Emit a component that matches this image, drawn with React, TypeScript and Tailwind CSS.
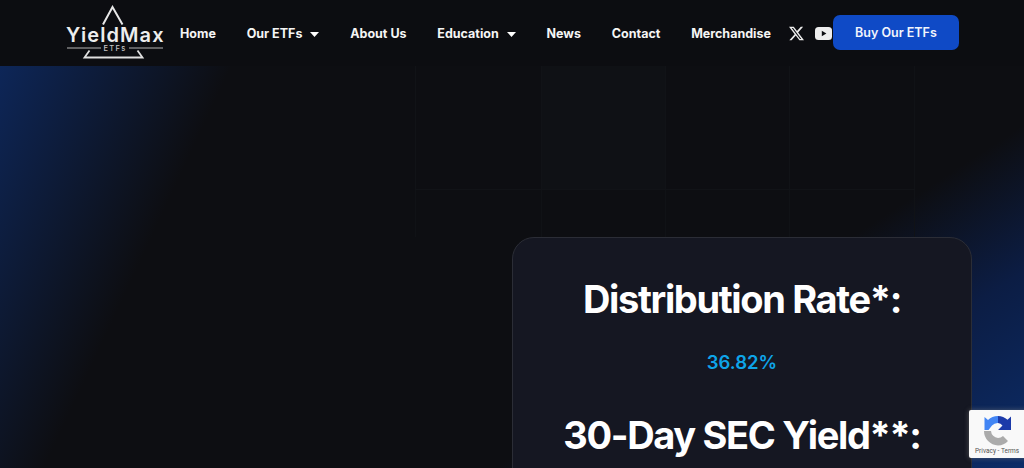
const navItems = [
  { label: "Home" },
  { label: "Our ETFs", caret: true },
  { label: "About Us" },
  { label: "Education", caret: true },
  { label: "News" },
  { label: "Contact" },
  { label: "Merchandise" },
];

const Caret = () => (
  <svg width="9" height="5" viewBox="0 0 9 5" className="ml-[8px] mt-[1px]">
    <path d="M0 0h9L4.5 5z" fill="#ffffff" />
  </svg>
);

const Logo = () => (
  <div className="relative h-[66px] w-[98px] shrink-0 text-[#eeeeee]">
    <svg width="98" height="66" viewBox="0 0 98 66" className="absolute left-0 top-0">
      <path d="M37 24.5 L46.5 7 L56.5 24.5" fill="none" stroke="#e8e8e8" strokeWidth="2" />
      <path d="M1 48h34M63 48h34" stroke="#b5b5b5" strokeWidth="1" />
      <path d="M23.5 50.5 L18.5 57.5 H76.5 L71.5 50.5" fill="none" stroke="#e0e0e0" strokeWidth="1.8" />
    </svg>
    <div className="absolute left-0 top-[26px] h-[18px] w-full text-center text-[20px] font-semibold leading-[18px] tracking-[1.1px]">
      YieldMax
    </div>
    <div className="absolute left-0 top-[44px] w-full text-center text-[7.5px] font-medium leading-[9px] tracking-[1.3px] text-[#c4c4c4]">
      ETFs
    </div>
  </div>
);

const Recaptcha = () => (
  <div className="absolute left-[969px] top-[410px] flex h-[48px] w-[70px] flex-col items-start rounded-l-[2px] bg-[#f9f9f9] pl-[6px] pt-[5px] shadow-[0_0_5px_rgba(128,128,128,0.6)]">
    <svg width="30" height="31" viewBox="0 0 30 31" className="ml-[8px]">
      <path d="M15 1a14 14 0 0 1 9.5 3.8L28 1.5V15H15l4.5-4.5A7.5 7.5 0 0 0 15 8z" fill="#1c3aa9" />
      <path d="M15 1A14 14 0 0 0 5 5L1.5 2V15h4L9 10.5A7.5 7.5 0 0 1 15 8z" fill="#4285f4" />
      <path d="M1 16h7a7.5 7.5 0 0 0 7 7 7.5 7.5 0 0 0 5-2l5 5a14 14 0 0 1-10 4.5A14.500 14.500 0 0 1 1 16z" fill="#ababab" />
    </svg>
    <div className="mt-[1px] whitespace-nowrap text-[6.5px] leading-[8px] text-[#555555] [font-family:Roboto,sans-serif]">
      Privacy - Terms
    </div>
  </div>
);

export default function App() {
  return (
    <div className="relative h-[468px] w-[1024px] overflow-hidden bg-[#0c0d11] [font-family:Inter,sans-serif]">
      <header className="relative z-10 flex h-[66px] items-center bg-[#0c0d11] pl-[66px]">
        <Logo />
        <nav className="ml-[16px] mt-[1px] flex items-center gap-[30.8px]">
          {navItems.map((item) => (
            <a key={item.label} className="flex items-center text-[12.5px] font-bold leading-[20px] text-[#f5f5f5]">
              {item.label}
              {item.caret && <Caret />}
            </a>
          ))}
        </nav>
        <div className="ml-[18px] flex items-center gap-[11px]">
          <svg width="15" height="15" viewBox="0 0 24 24" fill="#eeeeee">
            <path d="M18.9 1.2h3.7l-8 9.2L24 22.8h-7.4l-5.8-7.6-6.6 7.6H.5l8.6-9.8L0 1.2h7.6l5.2 6.9zm-1.3 19.4h2L6.5 3.3H4.3z" />
          </svg>
          <svg width="17" height="13" viewBox="0 0 17 13">
            <rect width="17" height="13" rx="3.5" fill="#eeeeee" />
            <path d="M6.8 3.7v5.6l4.6-2.8z" fill="#0c0d11" />
          </svg>
        </div>
        <a className="mb-[1px] ml-[1px] flex h-[35px] w-[126px] items-center justify-center rounded-[7px] bg-[#0f4ac6] pt-[2px] text-[12.5px] font-semibold text-[#f2f5fc]">
          Buy Our ETFs
        </a>
      </header>

      <main className="relative h-[402px] bg-[#0d0e12]">
        <div className="absolute inset-0 bg-[linear-gradient(115deg,#0d2658_0px,rgba(13,14,18,0)_210px)]" />
        <div className="absolute inset-0 bg-[linear-gradient(147deg,rgba(13,14,18,0)_607px,#0c1d44_730px,#0c2c68_895px)]" />
        <div className="absolute left-[541px] top-0 h-[124px] w-[124px] bg-[#0f1115]" />
        <div className="absolute left-[415px] top-0 grid h-[171px] w-[500px] grid-cols-[126px_124px_124px_126px] grid-rows-[124px_47px] border-r border-[#101216]">
          {Array.from({ length: 8 }).map((_, i) => (
            <div key={i} className={i < 4 ? "border-b border-l border-[#111317]" : "border-l border-[#101216]"} />
          ))}
        </div>

        <div className="relative flex justify-end pr-[52px] pt-[171px]">
          <section className="flex h-[300px] w-[460px] flex-col items-center rounded-[22px] border border-[#2b2d36] bg-[#151722] pt-[37px] text-white">
            <h2 className="text-[38px] font-bold leading-[48px] tracking-[-1.35px]">Distribution Rate*:</h2>
            <p className="mt-[25px] text-[18.5px] font-semibold leading-[28px] text-[#0ea5e9]">36.82%</p>
            <h2 className="mt-[35px] text-[38px] font-bold leading-[48px] tracking-[-1.35px]">30-Day SEC Yield**:</h2>
          </section>
        </div>
      </main>

      <Recaptcha />
    </div>
  );
}
